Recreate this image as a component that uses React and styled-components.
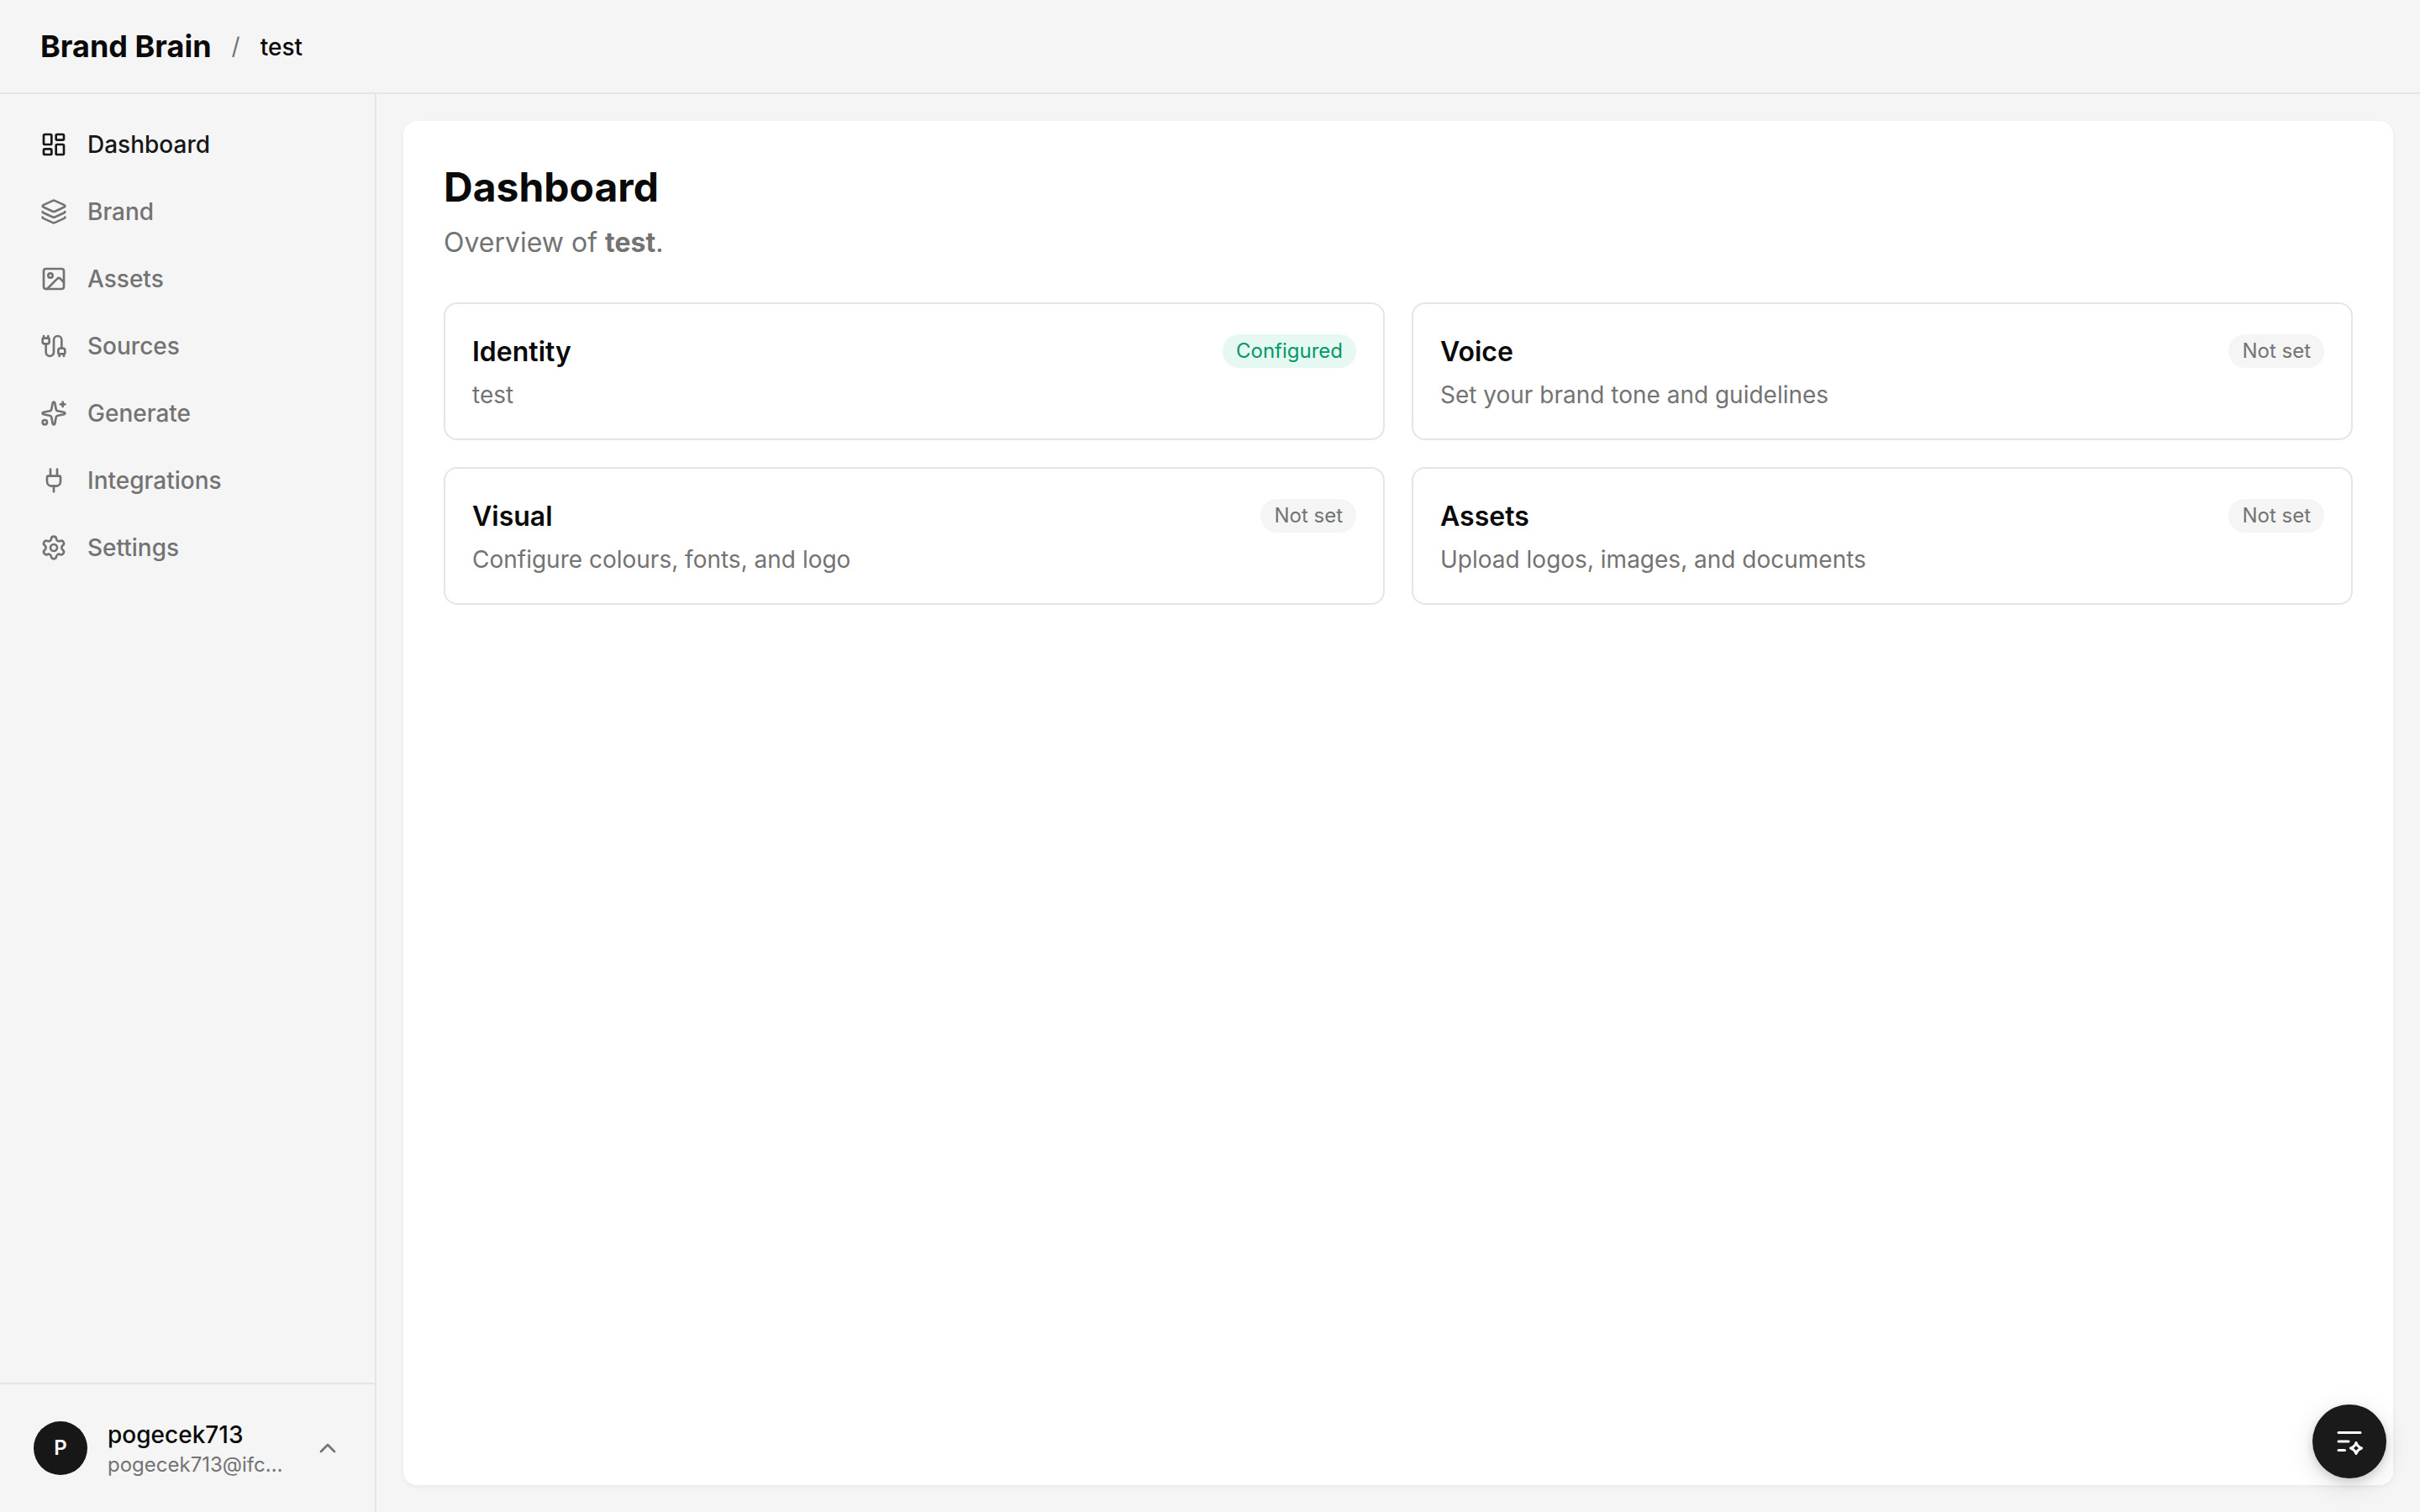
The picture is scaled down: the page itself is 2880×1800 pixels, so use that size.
import React from 'react';
import styled, { createGlobalStyle } from 'styled-components';
import {
  LayoutDashboard, Layers, Image, Cable, Sparkles, Plug, Settings, ChevronUp,
} from 'lucide-react';

const color = {
  ground: '#f5f5f5',
  line: '#e5e5e5',
  ink: '#0a0a0a',
  strong: '#171717',
  muted: '#737373',
};

const GlobalStyle = createGlobalStyle`
  *, *::before, *::after { box-sizing: border-box; }
  body {
    margin: 0;
    background: ${color.ground};
    color: ${color.ink};
    font-family: Inter, "Liberation Sans", sans-serif;
    -webkit-font-smoothing: antialiased;
  }
`;

const Shell = styled.div`
  display: flex;
  flex-direction: column;
  height: 100vh;
  background: ${color.ground};
`;

const Header = styled.header`
  display: flex;
  align-items: center;
  gap: 24px;
  height: 112px;
  flex: none;
  padding: 0 48px;
  border-bottom: 2px solid ${color.line};
`;

const Logo = styled.span`
  font-size: 36px;
  line-height: 56px;
  font-weight: 700;
`;

const Slash = styled.span`
  font-size: 28px;
  line-height: 42px;
  color: ${color.muted};
`;

const Crumb = styled.span`
  font-size: 28px;
  line-height: 42px;
  font-weight: 500;
  padding-top: 2px;
`;

const Body = styled.div`
  display: flex;
  flex: 1;
  min-height: 0;
`;

const Sidebar = styled.aside`
  display: flex;
  flex-direction: column;
  justify-content: space-between;
  width: 448px;
  flex: none;
  border-right: 2px solid ${color.line};
`;

const Nav = styled.nav`
  display: flex;
  flex-direction: column;
  gap: 8px;
  padding: 24px;
`;

const NavItem = styled.a`
  display: flex;
  align-items: center;
  gap: 24px;
  height: 72px;
  padding: 0 24px;
  font-size: 28px;
  line-height: 40px;
  font-weight: 500;
  color: ${(p) => (p.$active ? color.strong : color.muted)};
`;

const Account = styled.div`
  display: flex;
  align-items: center;
  gap: 24px;
  height: 154px;
  padding: 0 40px;
  border-top: 2px solid ${color.line};
`;

const Avatar = styled.div`
  display: flex;
  align-items: center;
  justify-content: center;
  width: 64px;
  height: 64px;
  flex: none;
  border-radius: 50%;
  background: ${color.strong};
  color: #fafafa;
  font-size: 24px;
  line-height: 32px;
  font-weight: 600;
`;

const AccountText = styled.div`
  flex: 1;
  min-width: 0;
`;

const AccountName = styled.div`
  font-size: 28px;
  line-height: 40px;
  font-weight: 500;
`;

const AccountEmail = styled.div`
  font-size: 24px;
  line-height: 32px;
  color: ${color.muted};
`;

const Main = styled.main`
  display: flex;
  flex: 1;
  min-width: 0;
  padding: 32px;
`;

const Panel = styled.section`
  flex: 1;
  padding: 48px;
  border-radius: 16px;
  background: #fff;
  box-shadow: 0 2px 6px rgba(0, 0, 0, 0.05);
`;

const Title = styled.h1`
  margin: 0 0 10px;
  font-size: 48px;
  line-height: 62px;
  font-weight: 700;
`;

const Subtitle = styled.p`
  margin: 0 0 46px;
  font-size: 32px;
  line-height: 50px;
  color: ${color.muted};

  strong { font-weight: 700; }
`;

const Cards = styled.div`
  display: grid;
  grid-template-columns: 1fr 1fr;
  gap: 32px;
`;

const Card = styled.article`
  padding: 32px;
  border: 2px solid ${color.line};
  border-radius: 16px;
`;

const CardHead = styled.div`
  display: flex;
  align-items: flex-start;
  justify-content: space-between;
  margin-bottom: 6px;
`;

const CardTitle = styled.h2`
  margin: 0;
  font-size: 32px;
  line-height: 50px;
  font-weight: 600;
`;

const CardText = styled.p`
  margin: 0;
  font-size: 28px;
  line-height: 40px;
  color: ${color.muted};
`;

const Badge = styled.span`
  margin-top: 4px;
  padding: 4px 16px;
  border-radius: 20px;
  font-size: 24px;
  line-height: 32px;
  color: ${(p) => (p.$done ? '#009966' : color.muted)};
  background: ${(p) => (p.$done ? '#e6f8f2' : color.ground)};
`;

const AssistButton = styled.button`
  position: fixed;
  right: 40px;
  bottom: 40px;
  display: flex;
  align-items: center;
  justify-content: center;
  width: 88px;
  height: 88px;
  padding: 0;
  border: 0;
  border-radius: 50%;
  background: #1a1a1a;
  color: #fff;
  box-shadow: 0 8px 32px rgba(0, 0, 0, 0.12), 0 4px 12px rgba(0, 0, 0, 0.15);
`;

const navItems = [
  { label: 'Dashboard', icon: LayoutDashboard, active: true },
  { label: 'Brand', icon: Layers },
  { label: 'Assets', icon: Image },
  { label: 'Sources', icon: Cable },
  { label: 'Generate', icon: Sparkles },
  { label: 'Integrations', icon: Plug },
  { label: 'Settings', icon: Settings },
];

const cards = [
  { title: 'Identity', text: 'test', done: true },
  { title: 'Voice', text: 'Set your brand tone and guidelines' },
  { title: 'Visual', text: 'Configure colours, fonts, and logo' },
  { title: 'Assets', text: 'Upload logos, images, and documents' },
];

const AssistIcon = () => (
  <svg width="40" height="40" viewBox="0 0 40 40" fill="none" stroke="currentColor" strokeWidth="3" strokeLinecap="round" strokeLinejoin="round">
    <path d="M7 9.5h26M7 20h12M7 30.5h7.500" />
    <path d="M28 21.500c1.100 3.200 3.300 5.400 6.500 6.500-3.200 1.100-5.400 3.300-6.500 6.500-1.100-3.200-3.300-5.400-6.500-6.500 3.200-1.100 5.400-3.300 6.500-6.500z" />
  </svg>
);

export default function App() {
  return (
    <Shell>
      <GlobalStyle />
      <Header>
        <Logo>Brand Brain</Logo>
        <Slash>/</Slash>
        <Crumb>test</Crumb>
      </Header>
      <Body>
        <Sidebar>
          <Nav>
            {navItems.map(({ label, icon: Icon, active }) => (
              <NavItem key={label} $active={active}>
                <Icon size={32} strokeWidth={2} />
                {label}
              </NavItem>
            ))}
          </Nav>
          <Account>
            <Avatar>P</Avatar>
            <AccountText>
              <AccountName>pogecek713</AccountName>
              <AccountEmail>pogecek713@ifc…</AccountEmail>
            </AccountText>
            <ChevronUp size={32} color={color.muted} />
          </Account>
        </Sidebar>
        <Main>
          <Panel>
            <Title>Dashboard</Title>
            <Subtitle>Overview of <strong>test</strong>.</Subtitle>
            <Cards>
              {cards.map((c) => (
                <Card key={c.title}>
                  <CardHead>
                    <CardTitle>{c.title}</CardTitle>
                    <Badge $done={c.done}>{c.done ? 'Configured' : 'Not set'}</Badge>
                  </CardHead>
                  <CardText>{c.text}</CardText>
                </Card>
              ))}
            </Cards>
          </Panel>
        </Main>
      </Body>
      <AssistButton aria-label="Assistant">
        <AssistIcon />
      </AssistButton>
    </Shell>
  );
}
